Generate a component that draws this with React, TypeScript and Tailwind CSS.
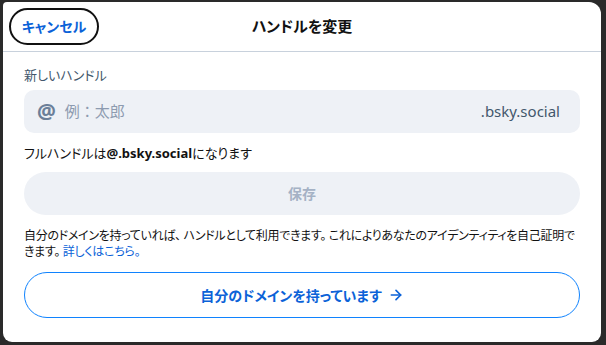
import { ArrowRight } from "lucide-react";

const font = { fontFamily: '"Noto Sans", "Noto Sans CJK JP", sans-serif' };

export default function App() {
  return (
    <div className="w-[606px] h-[345px] bg-[#2a2a2a] pt-[2px] pl-[3px] [font-feature-settings:'palt']" style={font}>
      <div className="w-[598px] h-[340px] bg-white rounded-tl-[4px] rounded-tr-[12px] rounded-b-[9px] flex flex-col">
        <header className="relative h-[50px] flex items-center justify-center border-b border-[#c8d1dc]">
          <button className="absolute left-[6px] top-[6px] h-[37px] w-[90px] rounded-full border-2 border-[#111] text-[14px] font-bold text-[#0b62d8]">
            キャンセル
          </button>
          <h1 className="text-[15px] font-bold text-[#111]">ハンドルを変更</h1>
        </header>

        <div className="px-[21px] pt-[14px] flex flex-col">
          <label className="text-[13px] text-[#42576c] leading-[18px]">新しいハンドル</label>
          <div className="mt-[6px] h-[43px] rounded-[10px] bg-[#eef1f6] flex items-center px-[13px]">
            <span className="text-[21px] font-bold text-[#6b7f99] leading-none">@</span>
            <span className="ml-[9px] text-[15px] text-[#8d9bb0] [font-feature-settings:normal]">例：太郎</span>
            <span className="ml-auto mr-[7px] text-[15px] text-[#42576c]">.bsky.social</span>
          </div>
          <p className="mt-[11px] text-[13px] text-[#111] leading-[18px]">
            フルハンドルは<span className="font-bold">@.bsky.social</span>になります
          </p>
          <button className="mt-[10px] h-[43px] rounded-full bg-[#eef1f6] text-[14px] font-bold text-[#a5b2c5]">
            保存
          </button>
          <p className="mt-[13px] text-[12px] text-[#111] leading-[16px] tracking-[-0.3px]">
            <span className="whitespace-nowrap">自分のドメインを持っていれば、 ハンドルとして利用できます。 これによりあなたのアイデンティティを自己証明で</span>
            <br />
            きます。 <span className="text-[#0b62d8]">詳しくはこちら。</span>
          </p>
          <button className="mt-[12px] h-[46px] rounded-full border border-[#1083fe] flex items-center justify-center gap-[6px] text-[14px] font-bold text-[#0b62d8]">
            自分のドメインを持っています
            <ArrowRight size={16} strokeWidth={2.5} />
          </button>
        </div>
      </div>
    </div>
  );
}
